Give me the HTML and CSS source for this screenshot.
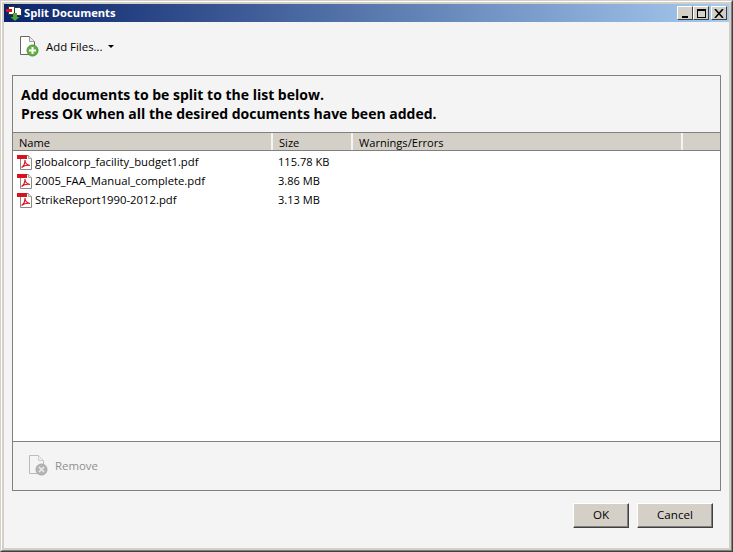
FILE: index.html
```html
<!DOCTYPE html>
<html lang="en">

<head>
    <meta charset="UTF-8">
    <meta name="viewport" content="width=device-width, initial-scale=1.0">
    <title>Split Documents</title>
    <link rel="stylesheet" href="styles.css">
</head>

<body>

    <svg width="0" height="0" class="defs">
        <symbol id="pdf" viewBox="0 0 16 16">
            <path d="M3.500 1.500h8l3 3v11h-11z" fill="#fff" stroke="#8a8a8a"/>
            <path d="M11.500 1.500v3h3" fill="#eee" stroke="#aaa"/>
            <rect x="0" y="1" width="10" height="4" fill="#d8131b"/>
            <path d="M4.500 13.500c2.500-1.500 3.500-5 3.500-7.500 0 3 2 5 5 5.500-3-.5-6.500.5-8.500 2z" fill="none" stroke="#d8131b" stroke-width="1.100"/>
        </symbol>
    </svg>

    <div class="window">
        <div class="window-inner">
            <div class="titlebar">
                <svg class="app-icon" width="16" height="16" viewBox="0 0 16 16">
                    <path d="M2.500 1.500h5l2 2v6h-7z" fill="#fff" stroke="#333"/>
                    <path d="M8.500 2.500h5l2 2v6h-7z" fill="#fff" stroke="#333"/>
                    <rect x="0" y="4" width="6" height="3" fill="#d8131b"/>
                    <path d="M7 8v4H4.500L9 16l4.500-4H11V8z" fill="#4ea72e"/>
                </svg>
                <span class="title">Split Documents</span>
                <div class="caption-buttons">
                    <div class="caption-btn"><span class="min-glyph"></span></div>
                    <div class="caption-btn"><span class="max-glyph"></span></div>
                    <div class="caption-btn close-btn">
                        <svg width="10" height="9" viewBox="0 0 10 9"><path d="M1 0l8 9M9 0L1 9" stroke="#000" stroke-width="1.600"/></svg>
                    </div>
                </div>
            </div>

            <div class="client">
                <div class="toolbar">
                    <svg width="22" height="22" viewBox="0 0 22 22">
                        <path d="M1.500 1.500h9l5 5v13h-14z" fill="#fff" stroke="#666"/>
                        <path d="M10.500 1.500v5h5" fill="#eee" stroke="#999"/>
                        <circle cx="13.500" cy="15.500" r="5.500" fill="#62b145" stroke="#4c8f35"/>
                        <path d="M13.500 12v7M10 15.500h7" stroke="#fff" stroke-width="2"/>
                    </svg>
                    <span class="add-label">Add Files...</span>
                    <span class="caret"></span>
                </div>

                <div class="panel">
                    <div class="intro">
                        <p>Add documents to be split to the list below.</p>
                        <p>Press OK when all the desired documents have been added.</p>
                    </div>

                    <div class="list-head">
                        <div class="col col-name">Name</div>
                        <div class="col col-size">Size</div>
                        <div class="col col-warn">Warnings/Errors</div>
                        <div class="col col-rest"></div>
                    </div>

                    <div class="list-body">
                        <div class="row">
                            <svg class="pdf-icon" width="16" height="16"><use href="#pdf"/></svg>
                            <span class="file-name">globalcorp_facility_budget1.pdf</span>
                            <span class="file-size">115.78 KB</span>
                        </div>
                        <div class="row">
                            <svg class="pdf-icon" width="16" height="16"><use href="#pdf"/></svg>
                            <span class="file-name">2005_FAA_Manual_complete.pdf</span>
                            <span class="file-size">3.86 MB</span>
                        </div>
                        <div class="row">
                            <svg class="pdf-icon" width="16" height="16"><use href="#pdf"/></svg>
                            <span class="file-name">StrikeReport1990-2012.pdf</span>
                            <span class="file-size">3.13 MB</span>
                        </div>
                    </div>

                    <div class="panel-foot">
                        <svg width="22" height="22" viewBox="0 0 22 22">
                            <path d="M1.500 1.500h9l5 5v13h-14z" fill="#f4f4f4" stroke="#bbb"/>
                            <path d="M10.500 1.500v5h5" fill="#eee" stroke="#ccc"/>
                            <circle cx="13.500" cy="15.500" r="5.500" fill="#b5b5b5" stroke="#a5a5a5"/>
                            <path d="M11 13l5 5M16 13l-5 5" stroke="#eee" stroke-width="1.300"/>
                        </svg>
                        <span class="remove-label">Remove</span>
                    </div>
                </div>

                <div class="actions">
                    <button type="button" class="btn btn-ok">OK</button>
                    <button type="button" class="btn btn-cancel">Cancel</button>
                </div>
            </div>
        </div>
    </div>

</body>

</html>
```

FILE: styles.css
```css
html,
body {
    margin: 0;
    padding: 0;
}

body {
    width: 733px;
    height: 552px;
    overflow: hidden;
    font-family: "Open Sans", "Noto Sans", Arial, sans-serif;
    font-size: 11.1px;
    color: #000;
}

.defs {
    position: absolute;
}

.window {
    width: 733px;
    height: 552px;
    box-sizing: border-box;
    border: 1px solid;
    border-color: #d4d0c8 #404040 #404040 #d4d0c8;
}

.window-inner {
    height: 100%;
    box-sizing: border-box;
    border: 1px solid;
    border-color: #fff #808080 #808080 #fff;
    padding: 2px;
    background-color: #d4d0c8;
    display: flex;
    flex-direction: column;
}

.titlebar {
    height: 18px;
    padding: 0 2px;
    display: flex;
    align-items: center;
    flex-shrink: 0;
    background: linear-gradient(to right, #0a246a, #a6caf0);
}

.app-icon {
    margin-right: 2px;
}

.title {
    color: #fff;
    font-weight: bold;
    font-size: 11.2px;
    padding-bottom: 2px;
}

.caption-buttons {
    margin-left: auto;
    display: flex;
}

.caption-btn {
    width: 16px;
    height: 14px;
    box-sizing: border-box;
    background-color: #d4d0c8;
    border: 1px solid;
    border-color: #fff #404040 #404040 #fff;
    display: flex;
    align-items: center;
    justify-content: center;
}

.close-btn {
    margin-left: 2px;
}

.min-glyph {
    width: 6px;
    height: 2px;
    background-color: #000;
    margin-top: 7px;
}

.max-glyph {
    width: 9px;
    height: 9px;
    box-sizing: border-box;
    border: 1px solid #000;
    border-top-width: 2px;
}

.client {
    flex: 1;
    background-color: #f4f4f4;
    padding: 0 8px;
    display: flex;
    flex-direction: column;
}

.toolbar {
    height: 53px;
    padding-left: 7px;
    padding-bottom: 5px;
    display: flex;
    align-items: center;
    box-sizing: border-box;
}

.add-label {
    margin-left: 5px;
    font-size: 11.400px;
}

.caret {
    margin-left: 5px;
    width: 0;
    height: 0;
    border-left: 3px solid transparent;
    border-right: 3px solid transparent;
    border-top: 3px solid #000;
}

.panel {
    height: 416px;
    box-sizing: border-box;
    border: 1px solid #808080;
    display: flex;
    flex-direction: column;
}

.intro {
    height: 56px;
    box-sizing: border-box;
    padding: 9px 8px 0;
    font-size: 14px;
    font-weight: bold;
    line-height: 19px;
}

.intro p {
    margin: 0;
}

.list-head {
    height: 19px;
    display: flex;
    background-color: #d4d0c8;
    border-bottom: 1px solid #808080;
    border-top: 1px solid #808080;
    box-sizing: border-box;
}

.col {
    box-sizing: border-box;
    padding: 2px 0 0 6px;
    line-height: 16px;
    border-right: 2px solid #f4f4f4;
}

.col-name {
    width: 260px;
}

.col-size {
    width: 80px;
}

.col-warn {
    width: 330px;
}

.col-rest {
    flex: 1;
    border-right: 0;
}

.list-body {
    flex: 1;
    background-color: #fff;
    padding-top: 1px;
}

.row {
    height: 19px;
    display: flex;
    align-items: center;
    padding-left: 4px;
}

.pdf-icon {
    flex-shrink: 0;
}

.file-name {
    width: 243px;
    margin-left: 2px;
    font-size: 11.300px;
}

.panel-foot {
    height: 49px;
    box-sizing: border-box;
    border-top: 1px solid #808080;
    padding-left: 15px;
    padding-bottom: 2px;
    display: flex;
    align-items: center;
}

.remove-label {
    margin-left: 5px;
    font-size: 11.400px;
    color: #8f8f8f;
}

.actions {
    flex: 1;
    display: flex;
    justify-content: flex-end;
    align-items: flex-start;
    gap: 8px;
    padding-top: 12px;
    padding-right: 8px;
}

.btn {
    height: 25px;
    padding: 0 0 2px;
    font-family: inherit;
    font-size: 11.600px;
    color: #000;
    background-color: #d4d0c8;
    border: 1px solid;
    border-color: #fff #404040 #404040 #fff;
    box-shadow: inset -1px -1px 0 #808080;
}

.btn-ok {
    width: 56px;
}

.btn-cancel {
    width: 76px;
}
```
